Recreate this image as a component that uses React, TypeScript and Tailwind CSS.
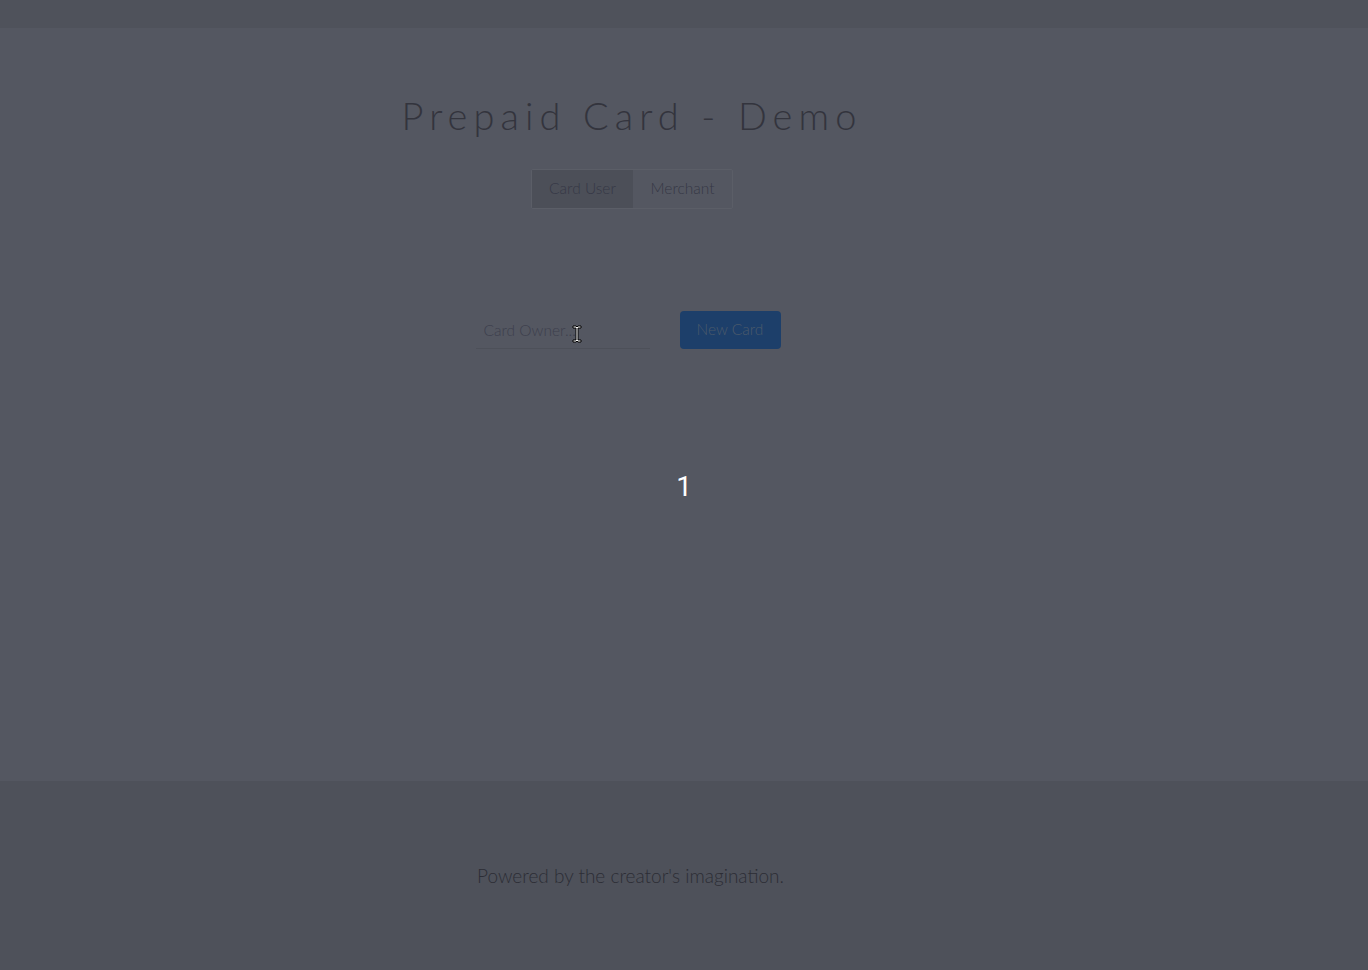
const TextCursor = () => (
  <svg width="10" height="18" viewBox="0 0 10 18" className="absolute left-[96px] top-[14px]">
    <path
      d="M1 1h3l1 1 1-1h3v2H6v12h3v2H6l-1-1-1 1H1v-2h3V3H1z"
      fill="#fff"
      stroke="#000"
      strokeWidth="1"
    />
  </svg>
);

export default function App() {
  return (
    <div className="min-h-screen flex flex-col bg-[#545761] font-['Lato','Open_Sans',sans-serif]">
      {/* top bar */}
      <div className="h-[28px] bg-[#4f525b]" />

      {/* main */}
      <main className="relative h-[753px] flex flex-col items-center pr-[104px]">
        <h1 className="mt-[65px] text-[38px] leading-[44px] font-light tracking-[6.1px] text-[#33343d]">
          Prepaid Card - Demo
        </h1>

        <div className="mt-[32px] flex border border-[#5b5e67] rounded-[2px]">
          <button className="h-[38px] w-[101px] bg-[#4c4f58] text-[15.5px] font-light text-[#363846]">
            Card User
          </button>
          <button className="h-[38px] w-[99px] text-[15.5px] font-light text-[#363846]">
            Merchant
          </button>
        </div>

        <div className="mt-[102px] mr-[8px] flex items-center gap-[30px]">
          <div className="relative w-[174px] h-[38px] border-b border-[#4d5059]">
            <input
              placeholder="Card Owner..."
              className="w-full h-full bg-transparent px-2 text-[15.5px] font-light text-[#3c3e4c] placeholder:text-[#3d3f4d] outline-none"
            />
            <TextCursor />
          </div>
          <button className="h-[38px] w-[101px] rounded-[4px] bg-[#1d3f6a] text-[15.5px] font-light text-[#4b5a6b]">
            New Card
          </button>
        </div>

        <div className="absolute left-0 right-0 top-[438px] flex justify-center">
          <span className="text-[28px] text-white font-['Roboto',sans-serif]">1</span>
        </div>
      </main>

      {/* footer */}
      <footer className="flex-1 bg-[#4e515a] pt-[82px] pl-[477px]">
        <p className="text-[19px] leading-[26px] font-light text-[#2c2d35]">Powered by the creator's imagination.</p>
      </footer>
    </div>
  );
}
